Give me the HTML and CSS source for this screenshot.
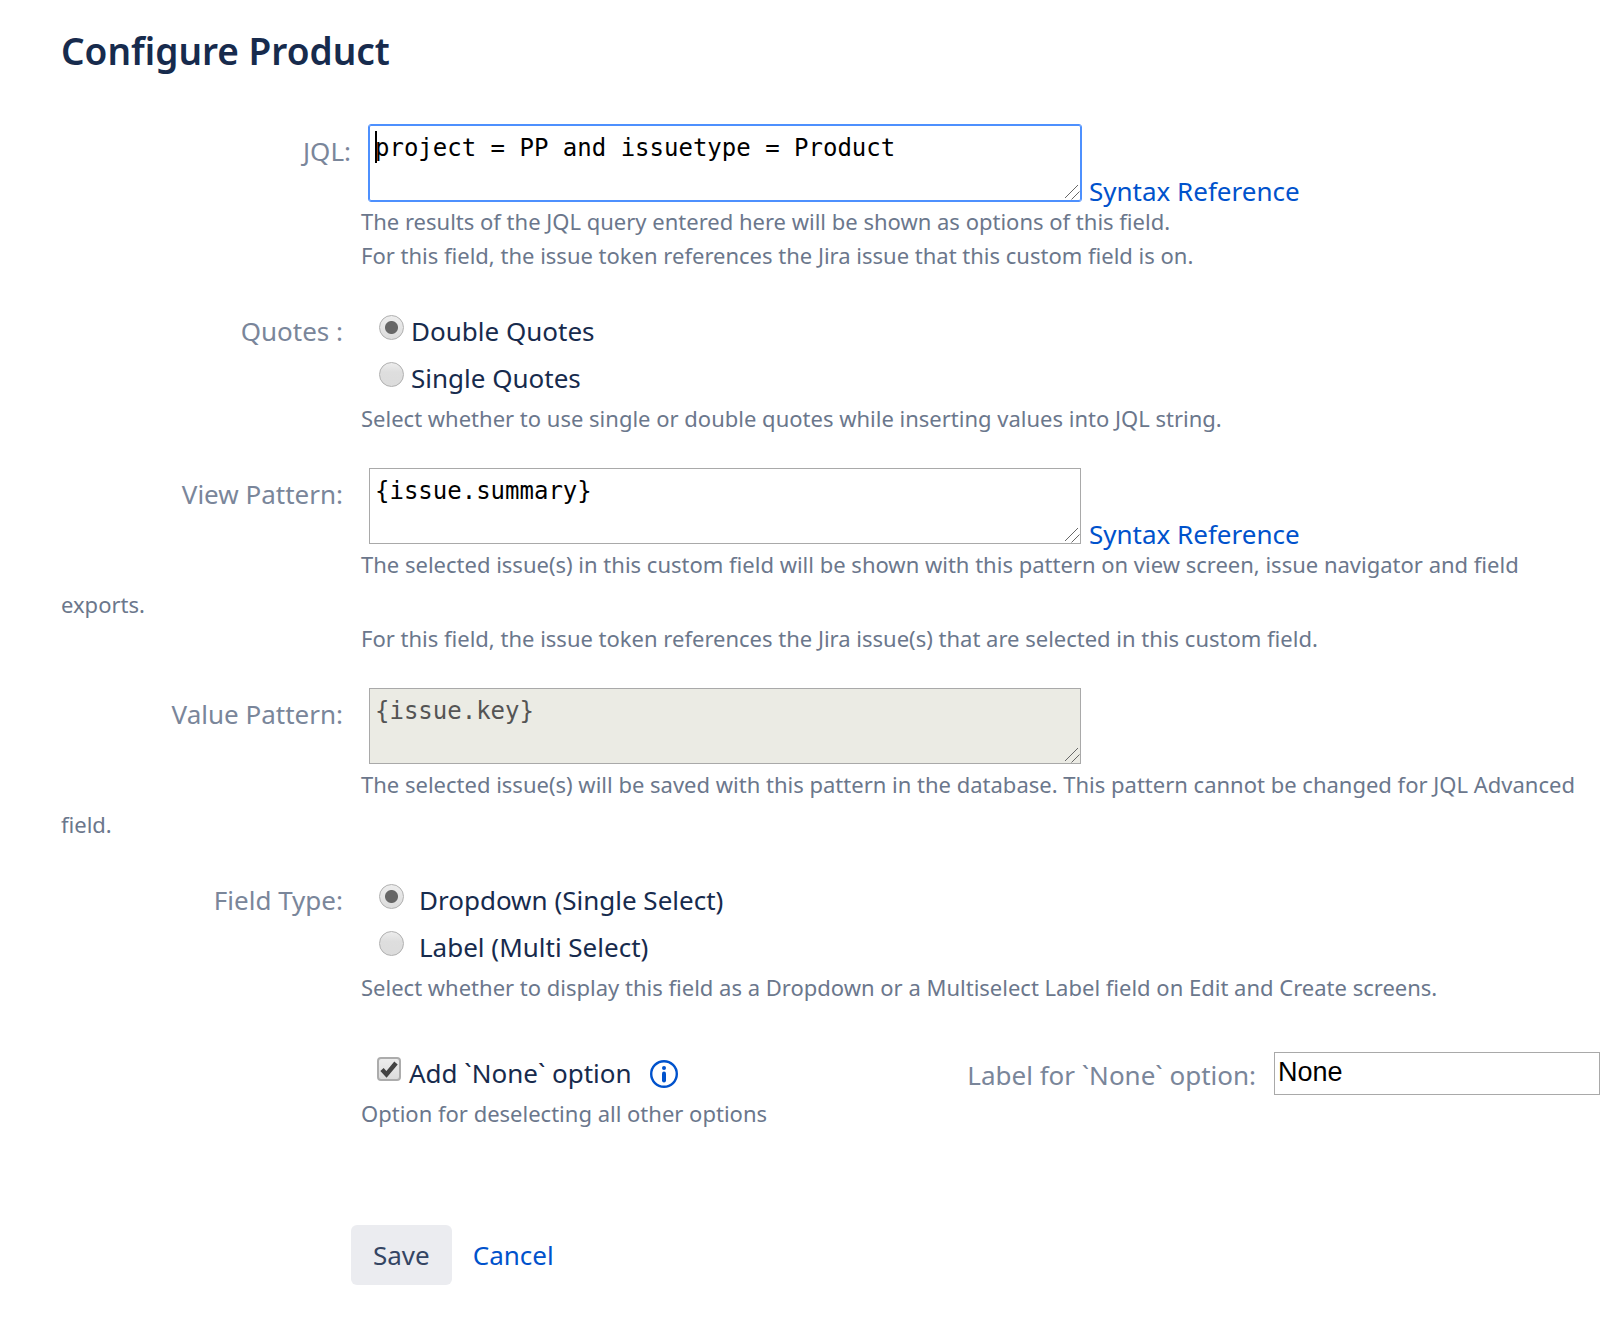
FILE: index.html
```html
<!DOCTYPE html>
<html lang="en">
<head>
    <meta charset="UTF-8">
    <meta name="viewport" content="width=device-width, initial-scale=1.0">
    <title>Configure Product</title>
    <link rel="stylesheet" href="styles.css">
</head>
<body>
    <form class="config-form">
        <h1>Configure Product</h1>

        <div class="field-group">
            <label class="field-label field-label-wide" for="jql">JQL:</label>
            <div class="field-row">
                <div class="editor">
                    <textarea id="jql" class="pattern active" spellcheck="false">project = PP and issuetype = Product</textarea>
                </div>
                <a class="syntax-link" href="#">Syntax Reference</a>
            </div>
            <div class="description">The results of the JQL query entered here will be shown as options of this field.</div>
            <div class="description">For this field, the issue token references the Jira issue that this custom field is on.</div>
        </div>

        <div class="field-group" role="radiogroup" aria-labelledby="quotes-label">
            <span class="field-label" id="quotes-label">Quotes :</span>
            <div class="choices">
                <label class="choice"><input type="radio" name="quotes" value="double" checked>Double Quotes</label>
                <label class="choice"><input type="radio" name="quotes" value="single">Single Quotes</label>
            </div>
            <div class="description">Select whether to use single or double quotes while inserting values into JQL string.</div>
        </div>

        <div class="field-group">
            <label class="field-label" for="view-pattern">View Pattern:</label>
            <div class="field-row">
                <textarea id="view-pattern" class="pattern" spellcheck="false">{issue.summary}</textarea>
                <a class="syntax-link" href="#">Syntax Reference</a>
            </div>
            <div class="description">The selected issue(s) in this custom field will be shown with this pattern on view screen, issue navigator and field exports.</div>
            <div class="description">For this field, the issue token references the Jira issue(s) that are selected in this custom field.</div>
        </div>

        <div class="field-group">
            <label class="field-label" for="value-pattern">Value Pattern:</label>
            <div class="field-row">
                <textarea id="value-pattern" class="pattern" disabled>{issue.key}</textarea>
            </div>
            <div class="description">The selected issue(s) will be saved with this pattern in the database. This pattern cannot be changed for JQL Advanced field.</div>
        </div>

        <div class="field-group" role="radiogroup" aria-labelledby="type-label">
            <span class="field-label" id="type-label">Field Type:</span>
            <div class="choices choices-spaced">
                <label class="choice"><input type="radio" name="type" value="dropdown" checked>Dropdown (Single Select)</label>
                <label class="choice"><input type="radio" name="type" value="label">Label (Multi Select)</label>
            </div>
            <div class="description">Select whether to display this field as a Dropdown or a Multiselect Label field on Edit and Create screens.</div>
        </div>

        <div class="field-group none-group">
            <div class="none-row">
                <label class="choice"><input type="checkbox" checked>Add `None` option
                    <svg class="info-icon" viewBox="0 0 28 28" width="28" height="28" aria-hidden="true">
                        <circle cx="14" cy="14" r="12.8" fill="none" stroke="#0052cc" stroke-width="2.4"/>
                        <circle cx="14" cy="8" r="2" fill="#0052cc"/>
                        <path d="M14 13.5v7" stroke="#0052cc" stroke-width="4" stroke-linecap="round"/>
                    </svg>
                </label>
                <div class="none-label">
                    <label for="none-text">Label for `None` option:</label>
                    <input id="none-text" type="text" value="None">
                </div>
            </div>
            <div class="description">Option for deselecting all other options</div>
        </div>

        <div class="buttons">
            <button type="button">Save</button>
            <a href="#">Cancel</a>
        </div>
    </form>
</body>
</html>
```
FILE: styles.css
```css
body {
    margin: 0;
    background-color: #fff;
    color: #172b4d;
    font-family: "Segoe UI", "Noto Sans", "Open Sans", sans-serif;
    font-size: 26px;
    line-height: 40px;
}
a {
    color: #0052cc;
    text-decoration: none;
}
.config-form {
    padding: 26px 15px 40px 61px;
}
h1 {
    margin: 0 0 49px;
    font-size: 37px;
    font-weight: 600;
    line-height: 50px;
}
.field-group {
    margin-bottom: 30px;
}
.field-label {
    float: left;
    width: 282px;
    padding-top: 6px;
    text-align: right;
}
.field-label-wide {
    width: 290px;
}
.field-label, .none-label label {
    color: #7a869a;
}
.field-row {
    display: flex;
    align-items: flex-end;
    gap: 8px;
    margin-left: 308px;
}
.editor {
    position: relative;
    display: flex;
}
.pattern {
    box-sizing: border-box;
    width: 712px;
    height: 76px;
    margin: 0;
    padding: 6px 5px;
    border: 1px solid #a9a9a9;
    font-family: Consolas, "DejaVu Sans Mono", monospace;
    font-size: 24px;
    line-height: 32px;
    color: #000;
    overflow: hidden;
}
.pattern::-webkit-scrollbar {
    width: 20px;
    height: 20px;
}
.pattern::-webkit-resizer {
    background: url("data:image/svg+xml,%3Csvg xmlns='http://www.w3.org/2000/svg' viewBox='0 0 20 20'%3E%3Cpath d='M1 17L17 1M9 17l8-8' fill='none' stroke='%23666'/%3E%3C/svg%3E") center / 20px no-repeat;
}
.pattern.active {
    border-color: #4d90fe;
    border-radius: 2px;
    outline: 1px solid #4d90fe;
    outline-offset: 0;
}
/* text cursor in the active editor */
.editor::after {
    content: "";
    position: absolute;
    top: 6px;
    left: 6px;
    width: 2px;
    height: 32px;
    background-color: #000;
}
.pattern:disabled {
    background-color: #ebebe4;
    color: #545454;
}
.syntax-link {
    margin-bottom: -10px;
}
.description {
    color: #6b778c;
    font-size: 22px;
    text-indent: 300px;
}
.description + .description {
    margin-top: -6px;
}
.choices {
    display: flex;
    flex-direction: column;
    gap: 7px;
    margin-left: 318px;
    padding-top: 6px;
}
.choice {
    display: flex;
    align-items: center;
    gap: 7px;
}
.choices-spaced .choice {
    gap: 15px;
}
.choice input {
    appearance: none;
    flex: none;
    box-sizing: border-box;
    width: 25px;
    height: 25px;
    margin: 0 0 8px;
    border: 1px solid #b0b0b0;
    background: linear-gradient(#ededed, #dedede 40%, #dcdcdc);
}
.choice input[type="radio"] {
    border-radius: 50%;
}
.choice input[type="radio"]:checked {
    background: radial-gradient(circle, #666 6px, transparent 7px), linear-gradient(#ededed, #dcdcdc);
}
.choice input[type="checkbox"] {
    width: 24px;
    height: 24px;
    border: 2px solid #acacac;
    border-radius: 4px;
}
.choice input[type="checkbox"]:checked {
    background: url("data:image/svg+xml,%3Csvg xmlns='http://www.w3.org/2000/svg' viewBox='0 0 20 20'%3E%3Cpath d='M3 10.5l4.5 5L17 4' fill='none' stroke='%23444' stroke-width='4.4'/%3E%3C/svg%3E") center / 20px no-repeat, linear-gradient(#ededed, #dcdcdc);
}
.info-icon {
    margin: 2px 0 0 10px;
}
.none-group {
    padding-top: 14px;
}
.none-row {
    display: flex;
    flex-wrap: wrap;
    align-items: center;
    justify-content: space-between;
    margin-bottom: -2px;
    padding-left: 316px;
}
.none-row .choice {
    gap: 8px;
}
.none-label {
    display: flex;
    align-items: center;
    gap: 18px;
}
.none-label input {
    box-sizing: border-box;
    width: 326px;
    height: 43px;
    padding: 0 3px 2px;
    border: 1px solid #a9a9a9;
    font-family: Arial, "Liberation Sans", sans-serif;
    font-size: 27px;
}
.none-label label {
    margin-top: 4px;
}
.buttons {
    display: flex;
    align-items: center;
    gap: 21px;
    margin: 92px 0 0 290px;
}
button {
    height: 60px;
    padding: 0 22px;
    border: none;
    border-radius: 6px;
    background-color: #ebecf0;
    color: #344563;
    font: inherit;
    cursor: pointer;
}
```
